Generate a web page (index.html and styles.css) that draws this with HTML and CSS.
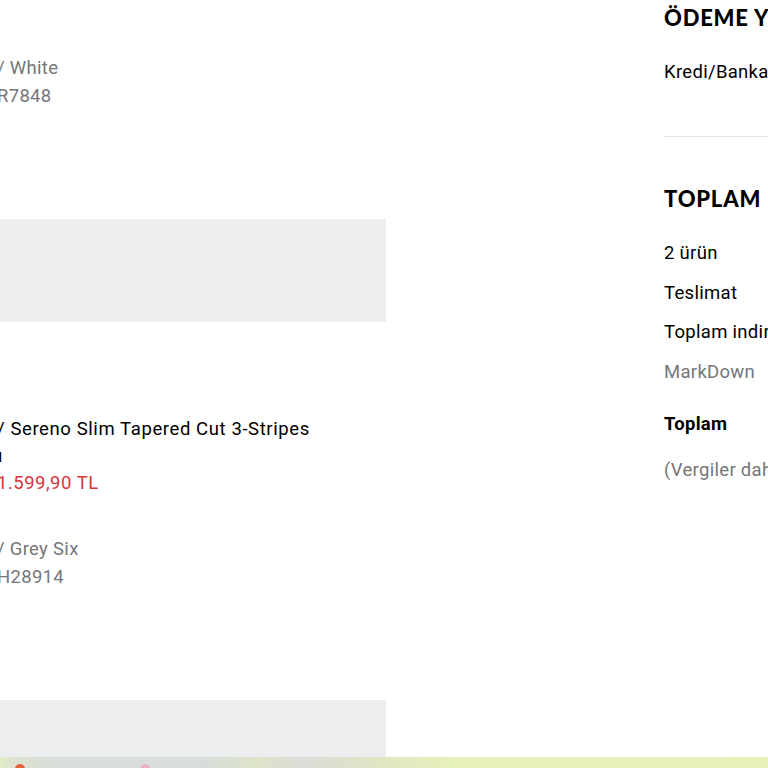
FILE: index.html
```html
<!DOCTYPE html>
<html lang="tr">
<head>
<meta charset="utf-8">
<title>Sipariş</title>
<link rel="stylesheet" href="styles.css">
</head>
<body>
<div class="page">
  <main class="items">
    <section class="item item-first">
      <p class="line muted clip">/ White</p>
      <p class="line muted clip">R7848</p>
    </section>
    <div class="panel"></div>
    <section class="item item-second">
      <p class="line name clip">/ Sereno Slim Tapered Cut 3-Stripes</p>
      <p class="line name clip2">ı</p>
      <p class="line price clip">1.599,90 TL</p>
      <div class="spacer"></div>
      <p class="line muted clip">/ Grey Six</p>
      <p class="line muted clip">H28914</p>
    </section>
    <div class="panel panel-last"></div>
  </main>
  <aside class="summary">
    <h2 class="heading heading-pay">ÖDEME YÖNTEMİ</h2>
    <p class="row">Kredi/Banka Kartı</p>
    <hr class="rule">
    <h2 class="heading heading-total">TOPLAM</h2>
    <p class="row r1">2 ürün</p>
    <p class="row r2">Teslimat</p>
    <p class="row r3">Toplam indirim</p>
    <p class="row r4 muted">MarkDown</p>
    <p class="row total">Toplam</p>
    <p class="row tax muted">(Vergiler dahil)</p>
  </aside>
</div>
<div class="bottom-bar">
  <span class="dot dot-red"></span>
  <span class="dot dot-pink"></span>
</div>
</body>
</html>
```

FILE: styles.css
```css
html, body {
  margin: 0;
  padding: 0;
  background: #fff;
}
body {
  width: 768px;
  height: 768px;
  overflow: hidden;
  font-family: Roboto, "Liberation Sans", sans-serif;
  color: #000;
}
p, h2 { margin: 0; }
.page {
  display: flex;
  width: 768px;
}
.items {
  width: 386px;
  flex: none;
  overflow: hidden;
}
.item-first {
  padding-top: 54px;
  height: 219px;
  box-sizing: border-box;
}
.line {
  font-size: 18.5px;
  line-height: 28px;
  white-space: nowrap;
  letter-spacing: 0.3px;
}
.clip { margin-left: -3px; }
.clip2 { margin-left: -2px; }
.muted { color: #767677; }
.name { color: #000; line-height: 27px; letter-spacing: 0.6px; }
.price { color: #d8353c; line-height: 27px; letter-spacing: 0.5px; }
.panel {
  height: 103px;
  background: #ebedee;
}
.item-second {
  padding-top: 94px;
  height: 378px;
  box-sizing: border-box;
}
.spacer { height: 38px; }
.panel-last { height: 100px; }
.summary {
  margin-left: 278px;
  flex: none;
  width: 300px;
  white-space: nowrap;
}
.heading {
  font-family: Lato, "Liberation Sans", sans-serif;
  font-weight: 900;
  font-size: 22px;
  letter-spacing: 0.8px;
}
.heading-pay {
  padding-top: 5px;
  line-height: 26px;
}
.heading-total {
  line-height: 26px;
  margin-top: 49px;
}
.row {
  font-size: 18.5px;
  line-height: 24px;
  letter-spacing: 0.3px;
}
.heading-pay + .row { margin-top: 29px; }
.rule {
  border: 0;
  border-top: 1px solid #e3e4e5;
  margin: 52px 0 0;
  height: 0;
}
.r1 { margin-top: 29px; }
.r2, .r4 { margin-top: 16px; }
.r3 { margin-top: 15px; }
.total { font-weight: 700; margin-top: 28px; }
.tax { margin-top: 22px; }
.bottom-bar {
  position: fixed;
  left: 0;
  bottom: 0;
  width: 768px;
  height: 11px;
  background: linear-gradient(90deg, #e4eec6 0, #dde3cf 10px, #d9dddb 60px, #d8dcdb 200px, #dde4c8 260px, #d9dcd8 300px, #dfe6c4 380px, #e6f2b9 460px, #e6f2b8 768px);
}
.dot {
  position: absolute;
  bottom: -6px;
  width: 10px;
  height: 10px;
  border-radius: 50%;
}
.dot-red { left: 15px; background: #e2603c; }
.dot-pink { left: 140px; background: #eab4c0; }
```
